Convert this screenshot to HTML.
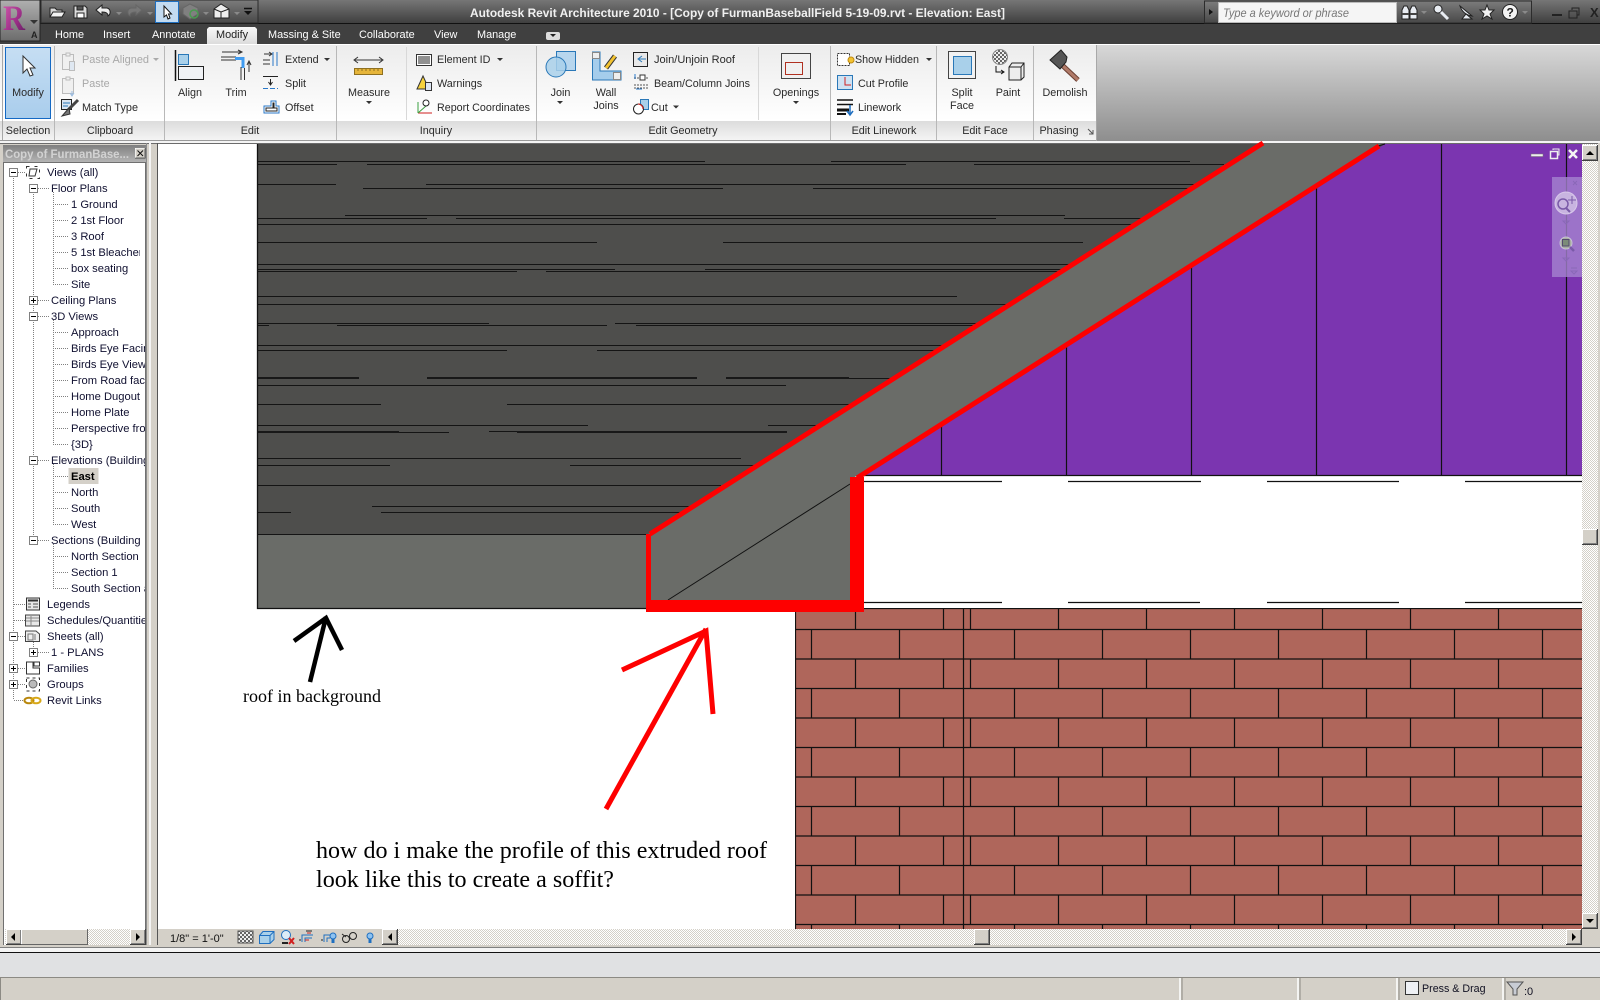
<!DOCTYPE html>
<html><head><meta charset="utf-8"><title>Revit Architecture 2010</title>
<style>
html,body{margin:0;padding:0;background:#d4d0c8;overflow:hidden}
svg{display:block}
text{font-family:"Liberation Sans",Arial,sans-serif;font-size:10.8px;fill:#2a2a2a}
.g{fill:#a8a8a8}
.c{text-anchor:middle}
.tab{fill:#fff;font-size:10.9px}
.tr{fill:#101030;font-size:11.2px}
.sf{font-family:"Liberation Serif","Times New Roman",serif;fill:#000}
</style></head><body>
<svg xmlns="http://www.w3.org/2000/svg" width="1600" height="1000" viewBox="0 0 1600 1000">
<defs>
<linearGradient id="tb" x1="0" y1="0" x2="0" y2="1"><stop offset="0" stop-color="#767676"/><stop offset="1" stop-color="#3d3d3d"/></linearGradient>
<linearGradient id="qa" x1="0" y1="0" x2="0" y2="1"><stop offset="0" stop-color="#7c7c7c"/><stop offset="1" stop-color="#484848"/></linearGradient>
<linearGradient id="app" x1="0" y1="0" x2="0" y2="1"><stop offset="0" stop-color="#b0b0b0"/><stop offset="1" stop-color="#6c6c6c"/></linearGradient>
<linearGradient id="rr" x1="0" y1="0" x2="1" y2="1"><stop offset="0" stop-color="#d860b0"/><stop offset=".55" stop-color="#a0308a"/><stop offset="1" stop-color="#5a1a5c"/></linearGradient>
<linearGradient id="pn" x1="0" y1="0" x2="0" y2="1"><stop offset="0" stop-color="#ececec"/><stop offset="1" stop-color="#ffffff"/></linearGradient>
<linearGradient id="pt" x1="0" y1="0" x2="0" y2="1"><stop offset="0" stop-color="#dcdcdc"/><stop offset="1" stop-color="#f4f4f4"/></linearGradient>
<linearGradient id="rb" x1="0" y1="0" x2="0" y2="1"><stop offset="0" stop-color="#d8d8d8"/><stop offset="1" stop-color="#8e8e8e"/></linearGradient>
<linearGradient id="mt" x1="0" y1="0" x2="0" y2="1"><stop offset="0" stop-color="#f8f8f8"/><stop offset="1" stop-color="#dcdcdc"/></linearGradient>
<linearGradient id="md" x1="0" y1="0" x2="0" y2="1"><stop offset="0" stop-color="#c6def3"/><stop offset="1" stop-color="#a9cdec"/></linearGradient>
<linearGradient id="bt" x1="0" y1="0" x2="0" y2="1"><stop offset="0" stop-color="#808080"/><stop offset="1" stop-color="#b4b4b4"/></linearGradient>
<pattern id="h" width="2" height="2" patternUnits="userSpaceOnUse"><rect width="2" height="2" fill="#fff"/><rect width="1" height="1" fill="#d4d0c8"/><rect x="1" y="1" width="1" height="1" fill="#d4d0c8"/></pattern>
<pattern id="ck" width="4" height="4" patternUnits="userSpaceOnUse"><rect width="4" height="4" fill="#eee"/><rect width="2" height="2" fill="#666"/><rect x="2" y="2" width="2" height="2" fill="#666"/></pattern>
<clipPath id="br"><rect x="5" y="162" width="140" height="560"/></clipPath>
<clipPath id="bk"><rect x="795" y="608" width="787" height="321"/></clipPath>
<g id="mn"><rect x=".5" y=".5" width="8" height="8" fill="#fff" stroke="#808080"/><path d="M2 4.5H7" stroke="#000"/></g>
<g id="pl"><rect x=".5" y=".5" width="8" height="8" fill="#fff" stroke="#808080"/><path d="M2 4.5H7M4.5 2V7" stroke="#000"/></g>
<g id="bn"><rect width="16" height="16" fill="#d4d0c8"/><path d="M.5 15V.5H15" stroke="#fff" fill="none"/><path d="M0 15.5H15.5V0" stroke="#404040" fill="none"/><path d="M1 14.5H14.5V1" stroke="#808080" fill="none"/></g>
</defs>

<rect width="1600" height="1000" fill="#d4d0c8"/>

<!-- title bar -->
<rect width="1600" height="24" fill="url(#tb)"/>
<rect y="23" width="1600" height="1" fill="#111"/>
<rect x="41" y="0" width="217" height="23" fill="url(#qa)" stroke="#2c2c2c"/>
<rect y="24" width="1600" height="20" fill="#404040"/>
<rect y="44" width="1600" height="1" fill="#fff"/>

<!-- app button -->
<rect x="0" y="0" width="40" height="41" fill="url(#app)" stroke="#222"/>
<text x="3" y="30" textLength="22" lengthAdjust="spacingAndGlyphs" style="font:bold 36px 'Liberation Serif',serif;fill:url(#rr)">R</text>
<path d="M30 20H38L34 24Z" fill="#333"/>
<text x="31" y="38" style="font:bold 9px 'Liberation Sans',sans-serif;fill:#222">A</text>

<!-- QAT -->
<g stroke="#222" stroke-width="1">
<path d="M50 17V8H55L57 10H62V17Z" fill="#d8d8d8"/><path d="M50 17L53 12H65L62 17Z" fill="#f2f2f2"/>
<path d="M74 6H85L87 8V18H74Z" fill="#dcdcdc"/><rect x="77" y="6" width="6" height="4" fill="#555"/><rect x="77" y="13" width="7" height="5" fill="#fff"/>
<path d="M96 10L102 5V8H107C111 9 111 14 108 16C108 13 106 12 102 12V15Z" fill="#eee"/>
<path d="M142 10L136 5V8H131C127 9 127 14 130 16C130 13 132 12 136 12V15Z" fill="#777" stroke="#666"/>
</g>
<path d="M116 12H122L119 15ZM147 12H153L150 15ZM203 12H209L206 15ZM234 12H240L237 15Z" fill="#8a8a8a"/>
<rect x="155.500" y="1.500" width="23" height="21" fill="#c3dbf1" stroke="#1f6fc0"/>
<path d="M164 6V17L166.500 15L168 19L170 18L168.500 14H171.500Z" fill="#fff" stroke="#111"/>
<path d="M183 8L190 4L198 8V14L190 19L183 14Z" fill="#808080" stroke="#666"/><circle cx="194" cy="14" r="4" fill="none" stroke="#4a9a50" stroke-width="1.500"/>
<path d="M214 9L221 4L229 9V18H214Z" fill="#eee" stroke="#222"/><path d="M214 9L221 12L229 9M221 12V18" fill="none" stroke="#222"/>
<path d="M244 8.500H252" stroke="#111" stroke-width="1.500"/><path d="M244 11H252L248 15Z" fill="#111"/>
<text x="470" y="17" textLength="535" lengthAdjust="spacingAndGlyphs" style="font-weight:bold;font-size:12px;fill:#f0f0f0">Autodesk Revit Architecture 2010 - [Copy of FurmanBaseballField 5-19-09.rvt - Elevation: East]</text>

<!-- InfoCenter -->
<rect x="1204.500" y="1" width="327" height="22" fill="url(#qa)" stroke="#2c2c2c"/>
<path d="M1209 9V15L1213 12Z" fill="#111"/>
<rect x="1218.500" y="2.500" width="178" height="20" fill="#f5f5f5" stroke="#bbb"/>
<text x="1223" y="17" textLength="126" lengthAdjust="spacingAndGlyphs" style="font-style:italic;font-size:12px;fill:#777">Type a keyword or phrase</text>
<g stroke="#222" fill="#e8ecf2">
<path d="M1402 19V10L1404 6H1407L1409 10V19Z"/><path d="M1410 19V10L1412 6H1415L1417 10V19Z"/>
<path d="M1409 11H1410" stroke-width="2"/>
<rect x="1402" y="13" width="7" height="2" fill="#444" stroke="none"/><rect x="1410" y="13" width="7" height="2" fill="#444" stroke="none"/>
<circle cx="1438" cy="9" r="4"/><path d="M1441 12L1448 19" stroke-width="3" stroke="#e8ecf2"/>
<path d="M1460 6C1462 12 1466 15 1472 16Z"/><path d="M1462 19H1472L1466 14Z"/>
<path d="M1487 5L1489 10H1494L1490 14L1492 19L1487 16L1482 19L1484 14L1480 10H1485Z" fill="#f2f2f2"/>
<circle cx="1510" cy="12" r="7.500" fill="#f4f4f4"/>
</g>
<text x="1506.500" y="16.500" style="font:bold 12px 'Liberation Sans',sans-serif;fill:#222">?</text>
<path d="M1421 11H1427L1424 14ZM1522 11H1528L1525 14Z" fill="#8a8a8a"/>
<rect x="1552" y="14" width="10" height="2" fill="#222"/>
<rect x="1569" y="11" width="8" height="7" fill="none" stroke="#222"/><path d="M1572 10V8H1579V15H1577" fill="none" stroke="#222"/>
<text x="1590" y="17" style="font:bold 13px 'Liberation Sans',sans-serif;fill:#222">X</text>

<!-- tabs -->
<path d="M207 44V29L209 27H255L257 29V44Z" fill="url(#mt)"/>
<text class="tab" x="55" y="38">Home</text>
<text class="tab" x="103" y="38">Insert</text>
<text class="tab" x="152" y="38">Annotate</text>
<text class="tab" x="216" y="38" style="fill:#222">Modify</text>
<text class="tab" x="268" y="38">Massing &amp; Site</text>
<text class="tab" x="359" y="38">Collaborate</text>
<text class="tab" x="434" y="38">View</text>
<text class="tab" x="477" y="38">Manage</text>
<rect x="546" y="32" width="14" height="8" rx="2" fill="#ddd"/><path d="M550 34H556L553 37Z" fill="#222"/>

<!-- ribbon -->
<rect x="0" y="45" width="1096" height="76" fill="url(#pn)"/>
<rect x="0" y="121" width="1096" height="19" fill="url(#pt)"/>
<rect x="1096" y="45" width="504" height="96" fill="url(#rb)"/>
<rect x="0" y="140" width="1096" height="1" fill="#9a9a9a"/>
<rect y="141" width="1600" height="2" fill="#f4f4f4"/>
<path d="M54.500 46V140M164.500 46V140M336.500 46V140M536.500 46V140M830.500 46V140M936.500 46V140M1033.500 46V140" stroke="#b8b8b8"/>
<path d="M1096.500 45V141M2.500 45V140" stroke="#a8a8a8"/>
<path d="M406.500 47V120M758.500 47V120" stroke="#d8d8d8"/>
<rect x="5.500" y="47.500" width="45" height="71" fill="url(#md)" stroke="#1469c4" stroke-width="1"/>

<!-- icons -->
<path d="M23 56V73L27 69L30 76L33 75L30 68L35 68Z" fill="#fff" stroke="#333"/>
<g stroke="#bcbcbc" fill="#f0f0f0">
<rect x="62.500" y="54.500" width="11" height="15"/><rect x="66" y="53" width="4" height="3"/><rect x="69.500" y="61.500" width="5" height="9" fill="#dfe8f2"/>
<rect x="62.500" y="78.500" width="11" height="15"/><rect x="66" y="77" width="4" height="3"/>
</g>
<path d="M72 91V95M70 93L72 96L74 93" stroke="#9bbce0" fill="none"/>
<rect x="61.500" y="99.500" width="10" height="10" fill="#dbe6f2" stroke="#222"/><path d="M63 103H70M63 106H68" stroke="#2a78b8"/>
<path d="M78 100L68 110" stroke="#444" stroke-width="3"/><path d="M69 108L62 116L70 114Z" fill="#777" stroke="#333"/>

<path d="M175.500 50V81" stroke="#111" stroke-width="1.500"/>
<rect x="178.500" y="54.500" width="10" height="10" fill="#a9d0ea" stroke="#2a78b8"/>
<rect x="178.500" y="66.500" width="25" height="13" fill="#f0f2f5" stroke="#222"/>

<path d="M222 52H241M238 50L242 52L238 54M221 57H236M221 60H236M241 67V80M244.500 68V80M249 72V62M247 65L249 61L251 65" stroke="#333" fill="none"/>
<path d="M235 58.500H243V68" stroke="#3f9bf0" stroke-width="3" fill="none"/>

<path d="M264 54H272M269 52L272 54L269 56M263 60H270M263 64H270" stroke="#333" fill="none"/>
<path d="M273 52V66M277 52V66" stroke="#2a78c8" fill="none"/>
<path d="M263 76.500H278M270.500 79V84M268.500 82L270.500 85L272.500 82" stroke="#222" fill="none"/>
<path d="M263 88.500H278" stroke="#2a78c8" stroke-dasharray="5 2"/>
<path d="M264 113V106H271V101H276V106H279V113Z" fill="#fff" stroke="#2a78c8"/><path d="M266 111V108H273V103H274V108H277V111Z" fill="none" stroke="#222"/>

<path d="M355 60H382M358 57L354 60L358 63M379 57L383 60L379 63" stroke="#333" fill="none"/>
<rect x="354.500" y="68.500" width="28" height="6" fill="#e6b53a" stroke="#8f7020"/>
<path d="M358 69V71M362 69V71M366 69V71M370 69V71M374 69V71M378 69V71" stroke="#8f7020"/>

<rect x="416.500" y="54.500" width="15" height="11" fill="#fff" stroke="#333"/><path d="M419 56V64M421 56V64M423 56V64M425 56V64M427 56V64M429 56V64" stroke="#222"/>
<path d="M417 89L423 76L429 89Z" fill="#f6d23c" stroke="#333"/><rect x="425.500" y="82.500" width="6" height="8" fill="#dde6f2" stroke="#333"/>
<path d="M418 113V102" stroke="#3aa040" fill="none"/><path d="M418 113H432" stroke="#d02020"/><path d="M418 113L426 106" stroke="#3aa040"/>
<circle cx="426" cy="103" r="3" fill="#fff" stroke="#222"/>

<rect x="556.500" y="51.500" width="19" height="19" fill="#b7d6ee" stroke="#2a78b8"/>
<circle cx="556" cy="67" r="10" fill="#a9d0ea" fill-opacity=".85" stroke="#2a78b8"/>

<path d="M592.500 52V80H621V71H600V52Z" fill="#a5cdec" stroke="#2a78b8"/>
<rect x="592.500" y="52.500" width="7" height="6" fill="#eee" stroke="#888"/><rect x="613.500" y="72.500" width="7" height="7" fill="#eee" stroke="#888"/>
<path d="M615 56L606 68" stroke="#333" stroke-width="5"/><path d="M615 56L606 68" stroke="#f2c230" stroke-width="3"/>

<rect x="633.500" y="52.500" width="14" height="14" fill="#e8e8e8" stroke="#222"/><path d="M646 59H639M642 56L638 59L642 62" stroke="#2a78b8" fill="none"/>
<path d="M634 78H648M634 85H649M634 88H649" stroke="#555" stroke-dasharray="2 1"/><path d="M635 74V79M636 89H642" stroke="#2a78c8"/><rect x="640" y="75" width="5" height="5" fill="#fff" stroke="#333"/>
<rect x="640.500" y="99.500" width="8" height="10" fill="#a9d0ea" stroke="#2a78b8"/><circle cx="638.500" cy="109" r="5" fill="#fff" stroke="#222"/><path d="M638 104A5 5 0 0 1 643 109" stroke="#d02020" fill="none"/>

<rect x="781.500" y="53.500" width="29" height="25" fill="#f0f0f0" stroke="#444"/><rect x="785.500" y="62.500" width="17" height="12" fill="none" stroke="#b03020"/>

<rect x="837.500" y="53.500" width="12" height="12" fill="#fff" stroke="#333" stroke-dasharray="2 1"/><circle cx="851" cy="60" r="3" fill="#f2c230" stroke="#c08a10"/>
<rect x="837.500" y="75.500" width="15" height="14" fill="#cfe2f2" stroke="#2a78b8"/><path d="M845 77V85H851" stroke="#d02020" fill="none"/>
<path d="M837 100H853M837 104.500H853" stroke="#111" stroke-width="1.500"/><path d="M837 110H849" stroke="#111" stroke-width="3"/><path d="M837 114H846" stroke="#111" stroke-width="2"/><path d="M850 105V114M847 111L850 115L853 111" stroke="#1f6fc0" stroke-width="1.500" fill="none"/>

<rect x="948.500" y="51.500" width="27" height="27" fill="#f2f2f2" stroke="#444"/><rect x="953.500" y="56.500" width="18" height="18" fill="#a9d0ea" stroke="#2a78b8"/>

<circle cx="1000" cy="57" r="7.500" fill="url(#ck)" stroke="#888"/>
<path d="M996 66V72H1003M1001 70L1004 72L1001 74" fill="none" stroke="#111"/>
<path d="M1009 67L1012 63H1024V77L1021 80H1009Z" fill="#eee" stroke="#222"/><path d="M1009 67H1021V80M1021 67L1024 63" fill="none" stroke="#222"/>

<path d="M1062 65L1078 80" stroke="#6b3f32" stroke-width="5"/><path d="M1062 65L1078 80" stroke="#b07a68" stroke-width="3"/>
<path d="M1050 60L1061 50L1067 57L1066 62L1060 69Z" fill="#555" stroke="#222"/>

<!-- dropdown arrows -->
<path d="M153 58H159L156 61Z" fill="#aaa"/>
<path d="M324 58H330L327 61ZM497 58H503L500 61ZM673 105.500H679L676 108.500ZM926 58H932L929 61Z" fill="#333"/>
<path d="M366 101H372L369 104ZM557 101H563L560 104ZM793 101H799L796 104Z" fill="#333"/>

<!-- ribbon labels -->
<text class="c" x="28" y="96">Modify</text>
<text class="g" x="82" y="63" textLength="67" lengthAdjust="spacingAndGlyphs">Paste Aligned</text>
<text class="g" x="82" y="87">Paste</text>
<text x="82" y="111" textLength="56" lengthAdjust="spacingAndGlyphs">Match Type</text>
<text class="c" x="190" y="96">Align</text>
<text class="c" x="236" y="96">Trim</text>
<text x="285" y="63">Extend</text>
<text x="285" y="87">Split</text>
<text x="285" y="111">Offset</text>
<text class="c" x="369" y="96">Measure</text>
<text x="437" y="63">Element ID</text>
<text x="437" y="87">Warnings</text>
<text x="437" y="111" textLength="93" lengthAdjust="spacingAndGlyphs">Report Coordinates</text>
<text class="c" x="560.500" y="96">Join</text>
<text class="c" x="606" y="96">Wall</text>
<text class="c" x="606" y="109">Joins</text>
<text x="654" y="63" textLength="81" lengthAdjust="spacingAndGlyphs">Join/Unjoin Roof</text>
<text x="654" y="87" textLength="96" lengthAdjust="spacingAndGlyphs">Beam/Column Joins</text>
<text x="651" y="111">Cut</text>
<text class="c" x="796" y="96">Openings</text>
<text x="855" y="63" textLength="64" lengthAdjust="spacingAndGlyphs">Show Hidden</text>
<text x="858" y="87">Cut Profile</text>
<text x="858" y="111">Linework</text>
<text class="c" x="962" y="96">Split</text>
<text class="c" x="962" y="109">Face</text>
<text class="c" x="1008" y="96">Paint</text>
<text class="c" x="1065" y="96">Demolish</text>
<text class="c" x="28" y="134">Selection</text>
<text class="c" x="110" y="134">Clipboard</text>
<text class="c" x="250" y="134">Edit</text>
<text class="c" x="436" y="134">Inquiry</text>
<text class="c" x="683" y="134">Edit Geometry</text>
<text class="c" x="884" y="134">Edit Linework</text>
<text class="c" x="985" y="134">Edit Face</text>
<text class="c" x="1059" y="134">Phasing</text>
<path d="M1088 129L1093 134M1093 130V134H1089" stroke="#555" fill="none"/>

<!-- project browser -->
<rect x="0" y="143" width="158" height="810" fill="#d4d0c8"/>
<rect x="0" y="143" width="1600" height="1" fill="#6c6c6c"/>
<rect x="3.500" y="162.500" width="142" height="783" fill="#fff" stroke="#707070"/>
<rect x="3" y="145" width="143" height="17" fill="url(#bt)"/>
<text x="5" y="158" textLength="124" lengthAdjust="spacingAndGlyphs" style="font-weight:bold;font-size:12px;fill:#d2d2d2">Copy of FurmanBase...</text>
<use href="#bn" transform="translate(135,148) scale(.66)"/>
<path d="M137.500 150.500L143 156M143 150.500L137.500 156" stroke="#111" fill="none"/>
<path d="M146.500 143V946" stroke="#8c8c8c" stroke-width="1"/>
<path d="M149.500 143V946M150.500 143V946" stroke="#f4f4f4"/>
<path d="M157.500 143V946" stroke="#555"/>

<g stroke="#808080" stroke-dasharray="1 1" fill="none">
<path d="M13.500 176V700M33.500 192V540M33.500 640V652M53.500 192V284M53.500 320V444M53.500 464V524M53.500 544V588"/>
<path d="M18 172.500H25M38 188.500H49M38 300.500H49M38 316.500H49M38 460.500H49M38 540.500H49M38 652.500H49"/>
<path d="M53 204.500H68M53 220.500H68M53 236.500H68M53 252.500H68M53 268.500H68M53 284.500H68M53 332.500H68M53 348.500H68M53 364.500H68M53 380.500H68M53 396.500H68M53 412.500H68M53 428.500H68M53 444.500H68M53 476.500H68M53 492.500H68M53 508.500H68M53 524.500H68M53 556.500H68M53 572.500H68M53 588.500H68"/>
<path d="M14 604.500H25M14 620.500H25M18 636.500H25M18 668.500H25M18 684.500H25M14 700.500H25"/>
</g>
<use href="#mn" x="9" y="168"/><use href="#mn" x="29" y="184"/><use href="#pl" x="29" y="296"/><use href="#mn" x="29" y="312"/><use href="#mn" x="29" y="456"/><use href="#mn" x="29" y="536"/><use href="#mn" x="9" y="632"/><use href="#pl" x="29" y="648"/><use href="#pl" x="9" y="664"/><use href="#pl" x="9" y="680"/>
<rect x="68.500" y="468" width="30" height="16" fill="#d4d0c8"/>

<!-- tree icons -->
<rect x="26.500" y="166.500" width="13" height="12" fill="none" stroke="#333" stroke-dasharray="3 5"/><path d="M30 169H37L35 176H29Z" fill="#fff" stroke="#333"/>
<rect x="26.500" y="598" width="13" height="12" fill="#e8e8e8" stroke="#333"/><path d="M28 600.500H38" stroke="#333" stroke-width="2"/><path d="M28 604H31M33 604H38M28 607H31M33 607H38" stroke="#555"/>
<rect x="25.500" y="615" width="14" height="11" fill="#e8e8e8" stroke="#444"/><path d="M26 618H39M26 621H39M31 616V626" stroke="#888"/>
<path d="M25.500 631H36L39.500 634V641.500H25.500Z" fill="#eee" stroke="#444"/><path d="M28 634H33V640H28ZM35 634V640" stroke="#777" fill="none"/>
<path d="M26.500 662H33V668H39.500V674H26.500Z" fill="#fff" stroke="#333"/><path d="M34 662H39.500V666H34Z" fill="#fff" stroke="#333"/>
<rect x="26.500" y="678" width="13" height="13" fill="#fff" stroke="#333" stroke-dasharray="3 3"/><circle cx="33" cy="684" r="4" fill="#bbb" stroke="#666"/>
<ellipse cx="29" cy="700.500" rx="4.500" ry="2.800" fill="none" stroke="#b8860b" stroke-width="2"/><ellipse cx="36" cy="700.500" rx="4.500" ry="2.800" fill="none" stroke="#d8a818" stroke-width="2"/>

<!-- tree labels -->
<g clip-path="url(#br)">
<text class="tr" x="47" y="176">Views (all)</text>
<text class="tr" x="51" y="192">Floor Plans</text>
<text class="tr" x="71" y="208">1 Ground</text>
<text class="tr" x="71" y="224">2 1st Floor</text>
<text class="tr" x="71" y="240">3 Roof</text>
<text class="tr" x="71" y="256">5 1st Bleacher</text>
<text class="tr" x="71" y="272">box seating</text>
<text class="tr" x="71" y="288">Site</text>
<text class="tr" x="51" y="304">Ceiling Plans</text>
<text class="tr" x="51" y="320">3D Views</text>
<text class="tr" x="71" y="336">Approach</text>
<text class="tr" x="71" y="352">Birds Eye Facing</text>
<text class="tr" x="71" y="368">Birds Eye View</text>
<text class="tr" x="71" y="384">From Road facing</text>
<text class="tr" x="71" y="400">Home Dugout</text>
<text class="tr" x="71" y="416">Home Plate</text>
<text class="tr" x="71" y="432">Perspective from</text>
<text class="tr" x="71" y="448">{3D}</text>
<text class="tr" x="51" y="464">Elevations (Building</text>
<text class="tr" x="71" y="480" style="font-weight:bold;fill:#000">East</text>
<text class="tr" x="71" y="496">North</text>
<text class="tr" x="71" y="512">South</text>
<text class="tr" x="71" y="528">West</text>
<text class="tr" x="51" y="544">Sections (Building</text>
<text class="tr" x="71" y="560">North Section</text>
<text class="tr" x="71" y="576">Section 1</text>
<text class="tr" x="71" y="592">South Section a</text>
<text class="tr" x="47" y="608">Legends</text>
<text class="tr" x="47" y="624">Schedules/Quantities</text>
<text class="tr" x="47" y="640">Sheets (all)</text>
<text class="tr" x="51" y="656">1 - PLANS</text>
<text class="tr" x="47" y="672">Families</text>
<text class="tr" x="47" y="688">Groups</text>
<text class="tr" x="47" y="704">Revit Links</text>
</g>
<rect x="140" y="246" width="5" height="13" fill="#fff"/><rect x="140" y="390" width="5" height="13" fill="#fff"/>

<!-- browser scrollbar -->
<rect x="5" y="929" width="140" height="16" fill="url(#h)"/>
<use href="#bn" x="6" y="929"/>
<rect x="21" y="929" width="67" height="16" fill="#d4d0c8"/><path d="M21.500 944V929.500H87" stroke="#fff" fill="none"/><path d="M21 944.500H87.500V929" stroke="#666" fill="none"/>
<use href="#bn" x="130" y="929"/>
<path d="M15 933V941L11 937Z" fill="#000"/><path d="M136 933V941L140 937Z" fill="#000"/>

<!-- canvas -->
<rect x="158" y="144" width="1424" height="785" fill="#fff"/>

<!-- dark background roof -->
<path d="M258 144H1400L850 478V534H258Z" fill="#4e4e4c"/>
<rect x="258" y="534" width="592" height="74" fill="#6a6c68"/>
<path fill="none" stroke="#141414" stroke-width="1.100" d="M258 161.500H705M831 161.500H1190M258 164.500H337M367 164.500H906M974 164.500H1224M258 184.500H336M426 184.500H1200M363 188.500H723M813 188.500H1194M345 215.500H1065M258 218.500H427M456 218.500H996M1064 218.500H1150M258 224.500H1140M258 242.500H597M723 242.500H1083M258 264.500H1075M258 269.500H615M705 269.500H1070M258 271.500H517M546 271.500H1065M258 296.500H957M258 304.500H1020M258 323.500H489M615 323.500H980M258 325.500H269M337 325.500H607M636 325.500H975M258 345.500H945M258 350.500H507M597 350.500H935M849 378.500H890M258 385.500H786M258 404.500H381M507 404.500H860M258 425.500H588M768 425.500H850M399 432.500H449M489 431.500H517M258 458.500H741M258 465.500H390M570 465.500H800M258 485.500H721M372 506.500H822M258 512.500H291M381 512.500H850M258 534.500H850"/>
<path fill="none" stroke="#111" stroke-width="1.800" d="M258 378H359M427 378H697M726 378H849M258 432H399M517 432H787"/>
<path d="M257.500 144V608.500H648" fill="none" stroke="#111" stroke-width="1.300"/>

<!-- purple -->
<path d="M1385 144H1582V475H850Z" fill="#7b35b0"/>
<path d="M941.500 420V475M1066.500 340V475M1191.500 260V475M1316.500 180V475M1441.500 144V475M1566.500 144V475" stroke="#111" stroke-width="1.200"/>
<path d="M850 475.500H1582" stroke="#111" stroke-width="1.200"/>

<!-- white gap lines -->
<path d="M864 481.500H1002M1068 481.500H1201M1267 481.500H1399M1465 481.500H1582M864 602.500H1002M1068 602.500H1200M1267 602.500H1399M1465 602.500H1582" stroke="#111" stroke-width="1.300"/>

<!-- roof extrusion -->
<path d="M648 534L1263 143H1384L850 480V608H648Z" fill="#6a6c68"/>
<path d="M1378 146L1385 144" stroke="#111"/>
<path d="M668 600L850 484" stroke="#111" stroke-width="1"/>

<!-- brick -->
<rect x="795" y="608" width="787" height="321" fill="#af665b"/>
<g clip-path="url(#bk)" fill="none" stroke="#111" stroke-width="1.200">
<path d="M795 608.500H1582M795 629.500H1582M795 659H1582M795 688.500H1582M795 718H1582M795 747.500H1582M795 777H1582M795 806.500H1582M795 836H1582M795 865.500H1582M795 895H1582M795 924.500H1582"/>
<path d="M795.500 608V929M963.500 608V929"/>
<path stroke-dasharray="29.500 29.500" d="M855.500 600V930M943.500 600V930M970.500 600V930M1058.500 600V930M1146.500 600V930M1234.500 600V930M1322.500 600V930M1410.500 600V930M1498.500 600V930"/>
<path stroke-dasharray="29.500 29.500" d="M811.500 629.500V930M899.500 629.500V930M1014.500 629.500V930M1102.500 629.500V930M1190.500 629.500V930M1278.500 629.500V930M1366.500 629.500V930M1454.500 629.500V930M1542.500 629.500V930"/>
</g>
<path d="M648 608H850" stroke="#111"/>

<!-- red annotations -->
<path d="M650 534L1263 143" stroke="#fe0000" stroke-width="5" fill="none"/>
<path d="M857 478L1379 146" stroke="#fe0000" stroke-width="5" fill="none"/>
<path d="M646 534H651V600H850V477H864V612H646Z" fill="#fe0000"/>
<path d="M706 629L606 809" stroke="#fe0000" stroke-width="5" fill="none"/>
<path d="M622 670L706 631L713 714" stroke="#fe0000" stroke-width="5" fill="none"/>

<!-- black arrow -->
<path d="M310 682L326 617" stroke="#000" stroke-width="4.500" fill="none"/>
<path d="M294 641L326 618L342 650" stroke="#000" stroke-width="4.500" fill="none"/>

<!-- annotation text -->
<text class="sf" x="243" y="702" textLength="138" lengthAdjust="spacingAndGlyphs" style="font-size:18px">roof in background</text>
<text class="sf" x="316" y="858" textLength="451" lengthAdjust="spacingAndGlyphs" style="font-size:24px">how do i make the profile of this extruded roof</text>
<text class="sf" x="316" y="887" textLength="298" lengthAdjust="spacingAndGlyphs" style="font-size:24px">look like this to create a soffit?</text>

<!-- view controls -->
<rect x="1531" y="154" width="12" height="2.500" fill="#eee" stroke="#777" stroke-width=".5"/>
<rect x="1550.500" y="151.500" width="7" height="7" fill="none" stroke="#eee" stroke-width="1.500"/><path d="M1553 150V149H1559V155H1558" stroke="#eee" fill="none"/>
<path d="M1569 150L1577 158M1577 150L1569 158" stroke="#f4f4f4" stroke-width="2.500"/>

<!-- nav bar -->
<rect x="1552" y="177" width="30" height="100" fill="#a585d0" fill-opacity=".78"/>
<path d="M1573 181L1577 185M1577 181L1573 185" stroke="#8a68b8"/>
<circle cx="1566" cy="203" r="11" fill="#c8b4e0" stroke="#d8c8ea"/>
<circle cx="1563" cy="204" r="5" fill="none" stroke="#7a5aa8" stroke-width="1.500"/><path d="M1566 208L1570 212" stroke="#7a5aa8" stroke-width="2"/><path d="M1572 196V204M1568 200H1576" stroke="#7a5aa8"/>
<circle cx="1566" cy="243" r="6" fill="#a8b0a0" stroke="#c8c0d8"/><rect x="1562.500" y="239.500" width="6.500" height="6.500" fill="#7c8c78" stroke="#554a70"/><path d="M1570 247L1574 251" stroke="#7a5aa8" stroke-width="2.500"/>
<path d="M1563 221H1569L1566 224ZM1563 258H1569L1566 261ZM1571 268H1577M1571 271H1577L1574 274Z" fill="none" stroke="#8a68b8"/>

<!-- scrollbars -->
<rect x="1582" y="144" width="16" height="785" fill="url(#h)"/>
<use href="#bn" x="1582" y="145"/><path d="M1586 155H1594L1590 151Z" fill="#000"/>
<use href="#bn" x="1582" y="529"/>
<use href="#bn" x="1582" y="913"/><path d="M1586 919H1594L1590 923Z" fill="#000"/>
<rect x="158" y="929" width="224" height="16" fill="#d4d0c8"/>
<rect x="398" y="929" width="1168" height="16" fill="url(#h)"/>
<use href="#bn" x="382" y="929"/><path d="M392 933V941L388 937Z" fill="#000"/>
<use href="#bn" x="974" y="929"/>
<use href="#bn" x="1566" y="929"/><path d="M1572 933V941L1576 937Z" fill="#000"/>
<rect x="1582" y="929" width="16" height="16" fill="#d4d0c8"/>
<rect x="1598" y="143" width="2" height="804" fill="#d4d0c8"/>

<text x="170" y="942" style="font-size:11px;fill:#111">1/8" = 1'-0"</text>
<rect x="238" y="931" width="15" height="12" fill="url(#ck)" stroke="#555"/>
<path d="M259.500 935.500L263 931.500H274V939.500L270 943.500H259.500Z" fill="#a9d0ea" stroke="#1f6fc0"/><path d="M259.500 935.500H270V943.500M270 935.500L274 931.500" fill="none" stroke="#1f6fc0"/>
<circle cx="286" cy="935" r="4.500" fill="#dcecf8" stroke="#1f6fc0"/><path d="M282 943H288" stroke="#222" stroke-width="2"/><path d="M289 938L294 944M294 938L289 944" stroke="#d02020" stroke-width="2"/>
<path d="M302 942V935H313M305 942V938H312" fill="none" stroke="#1f6fc0"/><path d="M307 933H311M305 940H309" stroke="#d02020"/><path d="M299 940H301M306 931H312" stroke="#222"/>
<path d="M324 942V935H330M327 942V938H330" fill="none" stroke="#1f6fc0"/><path d="M321 940H323" stroke="#222"/><circle cx="333" cy="936" r="3" fill="#8ec2f0" stroke="#1f6fc0"/><rect x="331.500" y="939" width="3" height="4" fill="#1f6fc0"/>
<circle cx="346" cy="939" r="3.500" fill="none" stroke="#222"/><circle cx="353" cy="936" r="3.500" fill="none" stroke="#222"/><path d="M349 938L350 937M342 934L346 937" stroke="#222" fill="none"/>
<circle cx="370" cy="936" r="3" fill="#8ec2f0" stroke="#1f6fc0"/><rect x="368.500" y="939" width="3" height="4" fill="#1f6fc0"/>

<!-- lower bars -->
<rect y="945" width="1600" height="2" fill="#d4d0c8"/>
<rect y="947" width="1600" height="1" fill="#808080"/>
<rect y="948" width="1600" height="4" fill="#f4f4f4"/>
<rect y="952" width="1600" height="1" fill="#111"/>
<rect y="953" width="1600" height="24" fill="#e0e1e3"/>
<rect y="977" width="1600" height="23" fill="#d4d0c8"/>
<rect y="977" width="1600" height="1" fill="#8c8a84"/>
<path d="M.5 978V1000" stroke="#8c8a84"/>
<path d="M1180 978V1000M1298 978V1000M1397 978V1000M1503 978V1000" stroke="#fff" stroke-width="1.500"/>
<path d="M1182 978V1000M1300 978V1000M1399 978V1000M1505 978V1000" stroke="#8c8a84"/>
<rect x="1405.500" y="981.500" width="13" height="13" fill="#eef0f4" stroke="#333"/>
<text x="1422" y="992" style="fill:#112;font-size:10.700px">Press &amp; Drag</text>
<path d="M1507 982H1523L1517 989V995H1513V989Z" fill="#c8ccd4" stroke="#555"/>
<text x="1524" y="995" style="fill:#112;font-size:11px">:0</text>
</svg>
</body></html>
